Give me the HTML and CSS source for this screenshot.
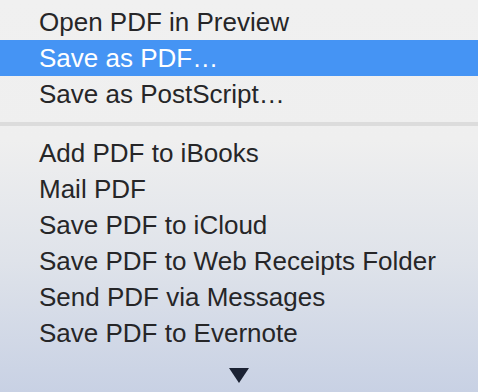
FILE: index.html
```html
<!DOCTYPE html>
<html lang="en">
<head>
  <meta charset="UTF-8">
  <meta name="viewport" content="width=device-width, initial-scale=1.0">
  <title>PDF Menu</title>
  <link rel="stylesheet" href="styles.css">
</head>
<body>
  <div class="menu">
    <!-- Top group -->
    <div class="menu-item">Open PDF in Preview</div>
    <div class="menu-item selected">Save as PDF…</div>
    <div class="menu-item">Save as PostScript…</div>

    <div class="separator"></div>

    <!-- Workflow group -->
    <div class="menu-item">Add PDF to iBooks</div>
    <div class="menu-item">Mail PDF</div>
    <div class="menu-item">Save PDF to iCloud</div>
    <div class="menu-item">Save PDF to Web Receipts Folder</div>
    <div class="menu-item">Send PDF via Messages</div>
    <div class="menu-item">Save PDF to Evernote</div>

    <!-- Scroll arrow -->
    <div class="scroll-arrow">
      <svg width="20" height="15" viewBox="0 0 20 15">
        <polygon points="0,0 20,0 10,15" fill="#1b2233"/>
      </svg>
    </div>
  </div>
</body>
</html>
```

FILE: styles.css
```css
body {
  margin: 0;
  padding: 0;
  font-family: 'Liberation Sans', Arial, sans-serif;
  background: linear-gradient(180deg, #f0f0f0 0px, #efefef 140px, #dfe3ea 260px, #c8d1e4 392px);
  height: 392px;
  overflow: hidden;
}

.menu {
  padding-top: 4px;
}

.menu-item {
  height: 36px;
  line-height: 36px;
  padding-left: 39px;
  font-size: 26px;
  color: #262628;
  white-space: nowrap;
}

.menu-item.selected {
  background: #4594f4;
  color: #fff;
}

.separator {
  height: 4px;
  margin: 10px 0 9px;
  background: #dcdcdc;
}

.scroll-arrow {
  display: flex;
  justify-content: center;
  padding-top: 17px;
}

.scroll-arrow svg {
  display: block;
}
```
